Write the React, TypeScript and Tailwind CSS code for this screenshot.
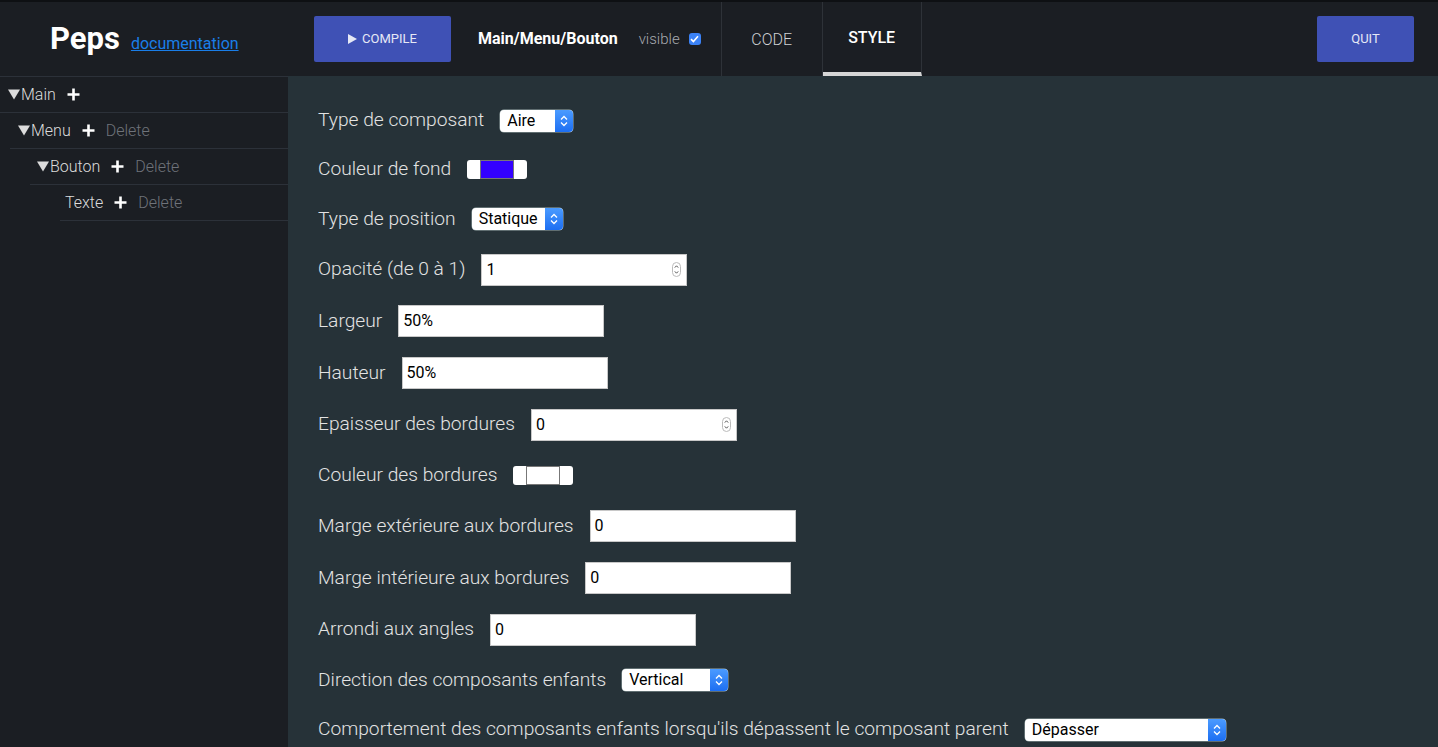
import React from 'react';

const font = { fontFamily: 'Roboto, "Noto Sans", sans-serif' };

function Plus() {
  return (
    <svg width="13" height="13" viewBox="0 0 13 13" className="shrink-0">
      <path d="M6.5 0.5v12M0.5 6.5h12" stroke="#fff" strokeWidth="2.6" />
    </svg>
  );
}

function Caret() {
  return (
    <svg width="12" height="11" viewBox="0 0 12 11" className="shrink-0 mr-[1px]">
      <path d="M0 0.5H12L6 10.5Z" fill="#dcdcdc" />
    </svg>
  );
}

function TreeRow({ label, indent, pad, open, canDelete }: { label: string; indent: string; pad: string; open?: boolean; canDelete?: boolean }) {
  return (
    <div className={`h-[36px] flex items-center border-b border-[#2c3139] ${indent} ${pad}`}>
      {open && <Caret />}
      <span className="text-[16px] font-light text-[#dcdcdc]">{label}</span>
      <span className="ml-[11px]"><Plus /></span>
      {canDelete && <span className="ml-[11px] text-[16px] font-light text-[#6f737a]">Delete</span>}
    </div>
  );
}

function Select({ value, width }: { value: string; width: string }) {
  return (
    <div className={`h-[22px] ${width} flex bg-white rounded-[4px] overflow-hidden shadow-[0_0_0_0.5px_#9aa]`}>
      <span className="flex-1 pl-[7px] text-[16px] leading-[22px] text-black truncate">{value}</span>
      <span className="w-[18px] bg-gradient-to-b from-[#4b9bff] to-[#1c6ef2] flex items-center justify-center">
        <svg width="8" height="12" viewBox="0 0 8 12">
          <path d="M1 4.5L4 1.5L7 4.5M1 7.5L4 10.5L7 7.5" stroke="#fff" strokeWidth="1.3" fill="none" />
        </svg>
      </span>
    </div>
  );
}

function TextInput({ value, spinner }: { value: string; spinner?: boolean }) {
  return (
    <div className="h-[32px] w-[206px] bg-white border border-[#c8c8c8] flex items-center pl-[4px] pr-[5px]">
      <span className="flex-1 text-[16px] text-black">{value}</span>
      {spinner && (
        <svg width="9" height="15" viewBox="0 0 9 15">
          <rect x="0.5" y="0.5" width="8" height="14" rx="4" fill="#fff" stroke="#bbb" />
          <path d="M2.8 5.6L4.5 3.8L6.2 5.6M2.8 9.4L4.5 11.2L6.2 9.4" stroke="#555" strokeWidth="1" fill="none" />
        </svg>
      )}
    </div>
  );
}

function ColorInput({ color }: { color: string }) {
  return (
    <div className="h-[19px] w-[60px] bg-white rounded-[3px] flex items-center justify-center">
      <div className={`h-[19px] w-[34px] border border-[#777] ${color}`} />
    </div>
  );
}

function Row({ label, h, children }: { label: string; h: string; children: React.ReactNode }) {
  return (
    <div className={`${h} flex items-center gap-4`}>
      <span className="text-[19.2px] font-light text-[#e3e3e3] whitespace-nowrap">{label}</span>
      {children}
    </div>
  );
}

export default function App() {
  return (
    <div style={font} className="w-[1438px] h-[747px] overflow-hidden bg-[#263238] flex flex-col">
      <header className="h-[76px] shrink-0 bg-[#1b1e23] border-t-2 border-[#0e1013] flex items-center">
        <div className="w-[314px] flex items-baseline pl-[50px] pt-[1px]">
          <span className="text-[31px] font-bold text-white">Peps</span>
          <a className="ml-[11px] text-[16px] text-[#1a7ee8] underline">documentation</a>
        </div>
        <button className="h-[46px] w-[137px] bg-[#3f51b5] rounded-[2px] flex items-center justify-center gap-[5px] text-[13px] text-[#e6e8f5]">
          <svg width="9" height="10" viewBox="0 0 9 10"><path d="M0 0L9 5L0 10Z" fill="#e6e8f5" /></svg>
          COMPILE
        </button>
        <span className="ml-[27px] text-[16px] font-bold text-white">Main/Menu/Bouton</span>
        <span className="ml-[21px] text-[15px] font-light text-[#a8abb0]">visible</span>
        <span className="ml-[9px] w-[12px] h-[12px] rounded-[3px] bg-[#3b82f6] flex items-center justify-center">
          <svg width="9" height="8" viewBox="0 0 9 8"><path d="M1 4.2L3.4 6.5L8 1.3" stroke="#fff" strokeWidth="1.6" fill="none" /></svg>
        </span>
        <div className="ml-[20px] self-stretch flex border-l border-[#2e3238]">
          <div className="w-[101px] flex items-center justify-center border-r border-[#2e3238] text-[16px] font-light text-[#cfd1d4] pt-[2px]">CODE</div>
          <div className="w-[99px] flex items-center justify-center border-r border-[#2e3238] border-b-4 border-b-[#d6d6d6] text-[16px] font-medium text-white pt-[2px]">STYLE</div>
        </div>
        <div className="flex-1" />
        <button className="mr-[24px] h-[46px] w-[97px] bg-[#3f51b5] rounded-[2px] text-[13px] text-[#e6e8f5]">QUIT</button>
      </header>
      <div className="flex flex-1 min-h-0">
        <aside className="w-[288px] shrink-0 bg-[#1b1e23] border-t border-[#2c3139]">
          <TreeRow label="Main" indent="ml-0" pad="pl-[8px]" open />
          <TreeRow label="Menu" indent="ml-[10px]" pad="pl-[8px]" open canDelete />
          <TreeRow label="Bouton" indent="ml-[30px]" pad="pl-[7px]" open canDelete />
          <TreeRow label="Texte" indent="ml-[60px]" pad="pl-[5px]" canDelete />
        </aside>
        <main className="flex-1 pl-[30px] pt-[20px]">
          <Row label="Type de composant" h="h-[49px]"><Select value="Aire" width="w-[73px]" /></Row>
          <Row label="Couleur de fond" h="h-[49px]"><ColorInput color="bg-[#3300ff]" /></Row>
          <Row label="Type de position" h="h-[50px]"><Select value="Statique" width="w-[91px]" /></Row>
          <Row label="Opacité (de 0 à 1)" h="h-[51px]"><TextInput value="1" spinner /></Row>
          <Row label="Largeur" h="h-[52px]"><TextInput value="50%" /></Row>
          <Row label="Hauteur" h="h-[52px]"><TextInput value="50%" /></Row>
          <Row label="Epaisseur des bordures" h="h-[51px]"><TextInput value="0" spinner /></Row>
          <Row label="Couleur des bordures" h="h-[50px]"><ColorInput color="bg-white" /></Row>
          <Row label="Marge extérieure aux bordures" h="h-[52px]"><TextInput value="0" /></Row>
          <Row label="Marge intérieure aux bordures" h="h-[52px]"><TextInput value="0" /></Row>
          <Row label="Arrondi aux angles" h="h-[51px]"><TextInput value="0" /></Row>
          <Row label="Direction des composants enfants" h="h-[50px]"><Select value="Vertical" width="w-[106px]" /></Row>
          <Row label="Comportement des composants enfants lorsqu'ils dépassent le composant parent" h="h-[49px]"><Select value="Dépasser" width="w-[201px]" /></Row>
        </main>
      </div>
    </div>
  );
}
